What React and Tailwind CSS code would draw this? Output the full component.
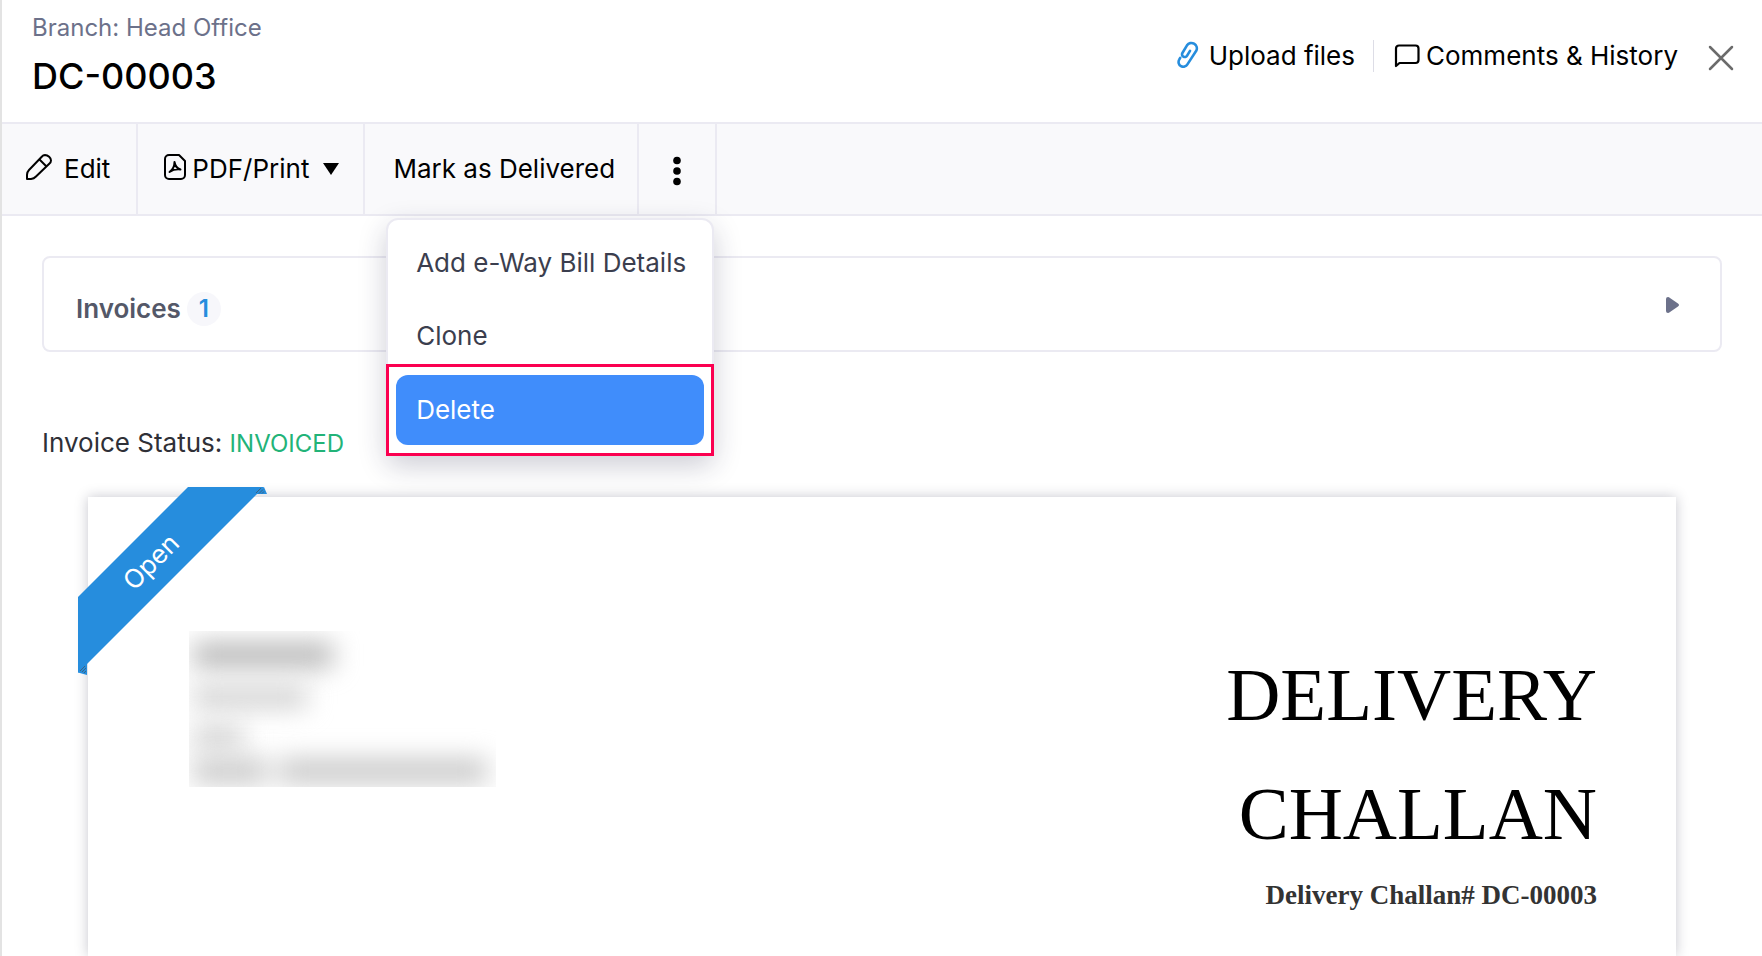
import { useState } from 'react'

const menuItems = ['Add e-Way Bill Details', 'Clone', 'Delete']

function PaperclipIcon() {
  return (
    <svg className="mb-1" width="22" height="27" viewBox="0 0 22 27" fill="none" stroke="#268ddd" strokeWidth="2.6" strokeLinecap="round" strokeLinejoin="round">
      <path d="M3.200 16.800 2.200 18.700a4.700 4.700 0 0 0 8.200 4.700L19.400 9.500a5.400 5.400 0 0 0-9.400-5.200L5.400 12a2.700 2.700 0 0 0 4.700 2.700L13 9.800" />
    </svg>
  )
}

function CommentIcon() {
  return (
    <svg width="26" height="24" viewBox="0 0 26 24" fill="none" stroke="#000" strokeWidth="2.2" strokeLinejoin="round">
      <path d="M2 22V4.500a3 3 0 0 1 3-3h16.500a3 3 0 0 1 3 3V16a3 3 0 0 1-3 3H5.500z" />
    </svg>
  )
}

function PencilIcon() {
  return (
    <svg className="mb-1" width="26" height="26" viewBox="0 0 26 26" fill="none" stroke="#000" strokeWidth="2" strokeLinejoin="round">
      <path d="M1 25v-4a7 7 0 0 1 2-5L16 2.500a4.500 4.500 0 0 1 3-1.500c3 0 6 3 6 5.500a4 4 0 0 1-1.500 3L10 22.500a8 8 0 0 1-5 2.500z" />
      <path d="m13.500 5.500 7 7" />
    </svg>
  )
}

function PdfIcon() {
  return (
    <svg className="mb-1" width="22" height="26" viewBox="0 0 22 26" fill="none" stroke="#000" strokeWidth="2" strokeLinejoin="round" strokeLinecap="round">
      <path d="M5 1h10l6 6v14a4 4 0 0 1-4 4H5a4 4 0 0 1-4-4V5a4 4 0 0 1 4-4z" />
      <path d="M10.500 8c0 4-2 8-5 10 3-2 7-3 11-2.500-3-1-5.500-4-6-7.500z" />
    </svg>
  )
}

function Ribbon() {
  return (
    <div className="absolute -left-2.5 -top-2.5 h-[188px] w-[188px]">
      <svg className="absolute inset-0" width="189" height="188" viewBox="0 0 189 188">
        <path d="M0 185.500 9 188v-12zM186 0l3 7h-13z" fill="#268ddd" />
        <path d="M110 0h76L0 186v-76z" fill="#268ddd" />
        <path d="M178 6l5-5M181 6.500l4-4M184 6.500l2-2M2 184l5-5M4 185l4-4M6 186l2-2" stroke="#3d6380" />
      </svg>
      <span className="absolute left-[73px] top-[75px] -translate-x-1/2 -translate-y-1/2 -rotate-45 text-[26px] leading-8 text-white">Open</span>
    </div>
  )
}

function App() {
  const [menuOpen, setMenuOpen] = useState(true)

  return (
    <div className="flex h-screen flex-col overflow-hidden border-l-2 border-[#e3e3e3] bg-white font-['Inter',sans-serif] text-[26px] leading-8 text-black">
      {/* Header */}
      <header className="flex items-start justify-between pl-[30px] pr-7">
        <div className="pb-[26px] pt-3">
          <p className="text-2xl leading-8 text-[#6c718a]">Branch: Head Office</p>
          <h1 className="mt-3 text-4xl font-medium leading-10">DC-00003</h1>
        </div>
        <div className="flex items-center pt-10">
          <button className="flex items-center gap-2.5">
            <PaperclipIcon />
            Upload files
          </button>
          <span className="ml-[18px] mr-5 h-8 w-px bg-[#dddde6]" />
          <button className="flex items-center gap-1.5">
            <CommentIcon />
            Comments &amp; History
          </button>
          <button aria-label="Close" className="ml-[30px] pt-1">
            <svg width="26" height="26" viewBox="0 0 26 26" stroke="#6b6b6b" strokeWidth="2.500" strokeLinecap="round">
              <path d="M2 2l22 22M24 2 2 24" />
            </svg>
          </button>
        </div>
      </header>

      {/* Toolbar */}
      <nav className="flex h-[94px] shrink-0 border-y-2 border-[#ebeaf2] bg-[#f9f9fb]">
        <button className="flex items-center gap-3 border-r-2 border-[#ebeaf2] pl-6 pr-[26px]">
          <PencilIcon />
          Edit
        </button>
        <button className="flex items-center gap-1.5 border-r-2 border-[#ebeaf2] pl-[26px] pr-6">
          <PdfIcon />
          PDF/Print
          <svg className="ml-2" width="16" height="12" viewBox="0 0 16 12"><path d="M0 0h16L8 12z" /></svg>
        </button>
        <button className="border-r-2 border-[#ebeaf2] pl-7 pr-[22px]">Mark as Delivered</button>
        <div className="relative border-r-2 border-[#ebeaf2]">
          <button aria-label="More actions" className="flex h-full w-[76px] items-center justify-center pt-1" onClick={() => setMenuOpen(!menuOpen)}>
            <svg width="8" height="30" viewBox="0 0 8 30"><circle cx="4" cy="4.500" r="3.800" /><circle cx="4" cy="15" r="3.800" /><circle cx="4" cy="25.500" r="3.800" /></svg>
          </button>
          {menuOpen && (
            <div className="absolute right-px top-[94px] z-10 w-[328px] rounded-xl border-2 border-[#ebeaf2] bg-white shadow-[0_10px_28px_rgba(30,30,70,0.22)]">
              <div className="px-2 pt-1.5">
                {menuItems.slice(0, 2).map((item) => (
                  <button key={item} className="block h-[73px] w-full whitespace-nowrap px-5 text-left text-[#3b3e4e]">{item}</button>
                ))}
              </div>
              <div className="-mx-0.5 -mb-0.5 -mt-2 border-3 border-[#fb0050] bg-white px-[7px] py-2">
                <button className="h-[70px] w-full rounded-xl bg-[#408dfb] px-5 text-left text-white">{menuItems[2]}</button>
              </div>
            </div>
          )}
        </div>
      </nav>

      <main className="flex grow flex-col px-10 pt-10">
        <button className="flex h-24 shrink-0 items-center justify-between rounded-lg border-2 border-[#ebeaf2] pl-8 pr-10 pt-0.5">
          <span className="flex items-center gap-1.5 pt-2">
            <span className="font-semibold text-[#545868]">Invoices</span>
            <span className="flex size-[34px] items-center justify-center rounded-full bg-[#f7f7fb] text-2xl font-semibold text-[#268ddd]">1</span>
          </span>
          <svg width="14" height="16" viewBox="0 0 14 16"><path d="M0 2Q0 0 2 0q1 0 2 1l8 5.500q2 1.500 0 3L4 15q-1 1-2 1-2 0-2-2z" fill="#6c718a" /></svg>
        </button>

        <p className="mt-[75px] text-[#2f3037]">
          Invoice Status: <span className="text-2xl leading-8 text-[#22b378]">INVOICED</span>
        </p>

        {/* Document sheet */}
        <article className="relative mx-[46px] mt-[37px] flex grow items-start justify-between bg-white pl-[101px] pr-[79px] shadow-[0_0_12px_rgba(30,30,60,0.25)]">
          <Ribbon />
          {/* Sender address, blurred out */}
          <div className="mt-[134px] flex h-[156px] w-[307px] flex-col items-start overflow-hidden pl-1">
            <div className="mt-3 h-6 w-[140px] shrink-0 bg-[#b4b4b4] blur-[13px]" />
            <div className="mt-5 h-5 w-[114px] shrink-0 bg-[#cccccc] blur-[13px]" />
            <div className="mt-5 h-5 w-[50px] shrink-0 bg-[#cccccc] blur-[13px]" />
            <div className="mt-3 flex gap-3 blur-[13px]">
              <div className="h-6 w-[74px] bg-[#c6c6c6]" />
              <div className="h-6 w-[208px] bg-[#c6c6c6]" />
            </div>
          </div>
          <div className="mt-[138px] flex w-[380px] flex-col font-['Liberation_Serif',serif] text-right">
            <h2 className="text-[75px] leading-[119px]">DELIVERY CHALLAN</h2>
            <p className="mt-1.5 text-[27px] leading-8 font-bold text-[#333]">Delivery Challan# DC-00003</p>
          </div>
        </article>
      </main>
    </div>
  )
}

export default App
